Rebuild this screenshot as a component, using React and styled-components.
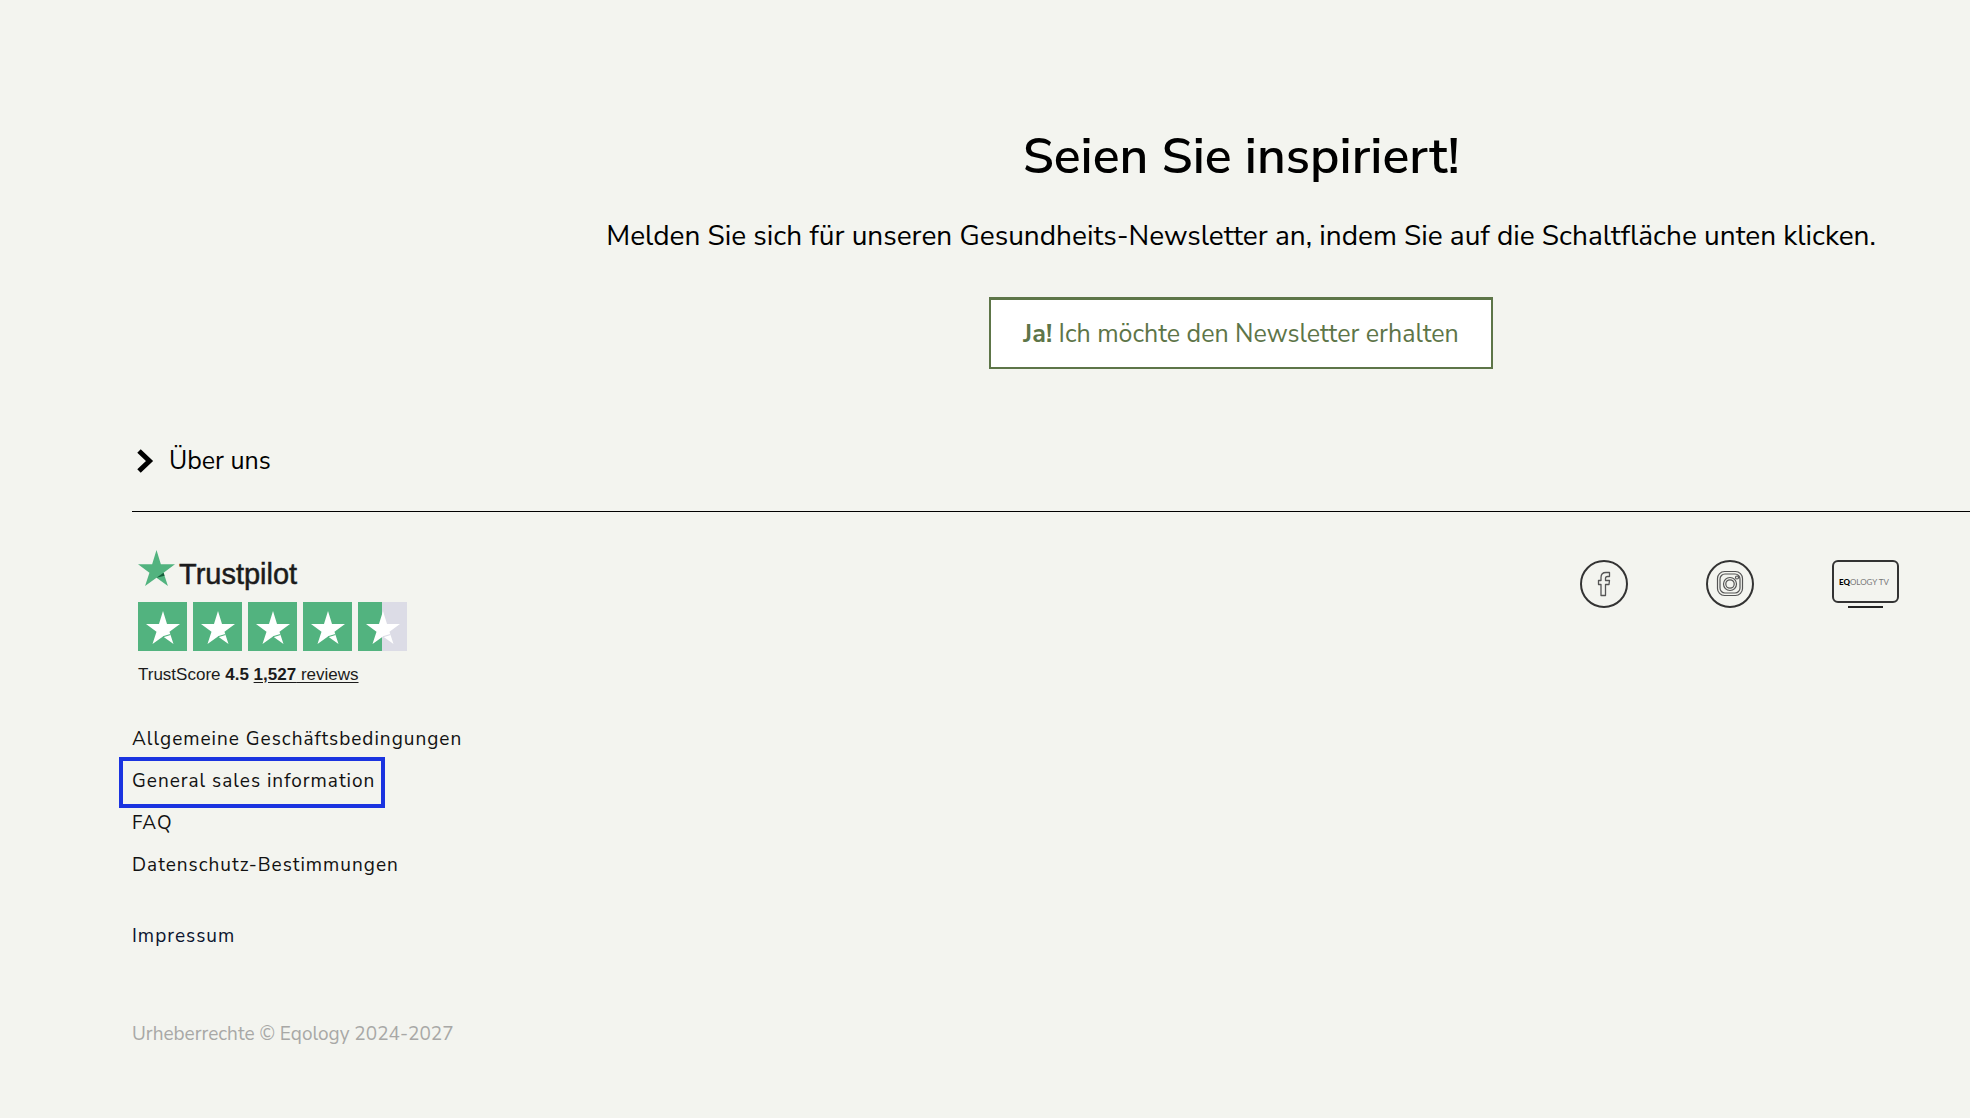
import React from "react";
import styled, { createGlobalStyle } from "styled-components";

const GlobalStyle = createGlobalStyle`
    * {
        box-sizing: border-box;
    }

    body {
        margin: 0;
        background-color: #f3f4ef;
        color: #000000;
        font-family: "Nunito Sans", "Noto Sans", sans-serif;
    }
`;

const STAR = "M50 0 L61.8 38.2 L100 38.2 L69.1 61 L80.9 97 L50 74.7 L19.1 97 L30.9 61 L0 38.2 L38.2 38.2 Z";

const links = [
    { label: "Allgemeine Geschäftsbedingungen" },
    { label: "General sales information", marked: true },
    { label: "FAQ" },
    { label: "Datenschutz-Bestimmungen" },
];

// fill: how much of the box is green, in percent
const RatingStar = ({ fill }) => (
    <StarBox $fill={fill}>
        <svg width="34" height="33" viewBox="0 0 100 97">
            <path d={STAR} fill="#ffffff" />
            <path d="M50 76 L72 69" stroke={fill === 100 ? "#52b37f" : "#dcdce6"} strokeWidth="3" />
        </svg>
    </StarBox>
);

const Trustpilot = () => (
    <Trust>
        <TrustBrand>
            <svg width="37" height="36" viewBox="0 0 100 97">
                <path d={STAR} fill="#52b37f" />
                <path d="M50 74.7 L71.8 69.2 L69.1 61 Z" fill="#17603c" />
            </svg>
            <TrustName>Trustpilot</TrustName>
        </TrustBrand>
        <Stars role="img" aria-label="4.5">
            {[100, 100, 100, 100, 49].map((fill, i) => (
                <RatingStar key={i} fill={fill} />
            ))}
        </Stars>
        <TrustScore>
            TrustScore <b>4.5</b> <ReviewLink href="#reviews"><b>1,527</b> reviews</ReviewLink>
        </TrustScore>
    </Trust>
);

const FacebookIcon = () => (
    <svg width="48" height="48" viewBox="0 0 48 48" fill="none" stroke="#333333">
        <circle cx="24" cy="24" r="23" strokeWidth="2" />
        <path d="M21 35.5 V24.5 H18.5 V20.5 H21 V17.5 Q21 12.5 26 12.5 H29.5 V16.5 H27.5 Q25.5 16.5 25.5 18.5 V20.5 H29.5 L29 24.5 H25.5 V35.5 Z" stroke="#555555" strokeWidth="1.3" strokeLinejoin="round" />
    </svg>
);

const InstagramIcon = () => (
    <svg width="48" height="48" viewBox="0 0 48 48" fill="none" stroke="#333333">
        <circle cx="24" cy="24" r="23" strokeWidth="2" />
        <g stroke="#555555" strokeWidth="1.2">
            <rect x="11.5" y="11.5" width="25" height="24" rx="7" />
            <rect x="14" y="14" width="20" height="19" rx="5" />
            <circle cx="24" cy="24" r="6.5" />
            <circle cx="24" cy="24" r="4.2" />
            <circle cx="31" cy="17.5" r="1.5" />
        </g>
    </svg>
);

const TvIcon = () => (
    <svg width="68" height="48" viewBox="0 0 68 48">
        <rect x="1" y="1" width="65" height="41" rx="5" fill="none" stroke="#333333" strokeWidth="2" />
        <path d="M16 47 H51" stroke="#222222" strokeWidth="2" />
        <text x="7" y="25" fontFamily="Lato, sans-serif" fontSize="8" fontWeight="400" fill="#777777">
            <tspan fontWeight="900" fill="#000000">EQ</tspan>OLOGY TV
        </text>
    </svg>
);

const App = () => (
    <Page>
        <GlobalStyle />
        <Newsletter>
            <Title>Seien Sie inspiriert!</Title>
            <SubTitle>
                Melden Sie sich für unseren Gesundheits-Newsletter an, indem Sie auf die Schaltfläche unten klicken.
            </SubTitle>
            <SignUpButton type="button">
                <b>Ja!</b> Ich möchte den Newsletter erhalten
            </SignUpButton>
        </Newsletter>
        <Footer>
            <AboutButton type="button">
                <svg width="17" height="24" viewBox="0 0 17 24" fill="none" stroke="#000000" strokeWidth="5">
                    <path d="M2 2 L12.5 12 L2 22" />
                </svg>
                Über uns
            </AboutButton>
            <Line />
            <FooterTop>
                <Trustpilot />
                <Social>
                    <a href="#facebook" aria-label="Facebook"><FacebookIcon /></a>
                    <a href="#instagram" aria-label="Instagram"><InstagramIcon /></a>
                    <a href="#tv" aria-label="Eqology TV"><TvIcon /></a>
                </Social>
            </FooterTop>
            <LinkList>
                {links.map(({ label, marked }) => (
                    <LinkItem key={label}>
                        <FooterLink href="#info" $marked={marked}>{label}</FooterLink>
                    </LinkItem>
                ))}
            </LinkList>
            <ImprintLink href="#impressum">Impressum</ImprintLink>
            <Copyright>Urheberrechte © Eqology 2024-2027</Copyright>
        </Footer>
    </Page>
);

export default App;

const Page = styled.div`
    width: 100%;
    overflow: hidden;
`;

const Newsletter = styled.section`
    display: flex;
    flex-direction: column;
    align-items: center;
    padding: 120px 0 0 26%;
`;

const Title = styled.h2`
    margin: 0;
    font-size: 50px;
    font-weight: 600;
    line-height: 74px;
`;

const SubTitle = styled.p`
    margin: 22px 0 41px;
    font-size: 28px;
    line-height: 40px;
    white-space: nowrap;
`;

const SignUpButton = styled.button`
    height: 72px;
    padding: 0 32px;
    border: 2px solid #5d7548;
    border-top-width: 3px;
    background-color: #ffffff;
    color: #5d7548;
    font-family: inherit;
    font-size: 25px;
    font-weight: 400;
    white-space: nowrap;
`;

const Footer = styled.footer`
    padding: 73px 0 0 132px;
`;

const AboutButton = styled.button`
    display: flex;
    align-items: center;
    gap: 15px;
    height: 38px;
    padding: 0 5px;
    border: 0;
    background: none;
    color: #000000;
    font-family: inherit;
    font-size: 25px;
`;

const Line = styled.hr`
    height: 1px;
    margin: 31px 0 0;
    border: 0;
    background-color: #000000;
`;

const FooterTop = styled.div`
    display: flex;
    justify-content: space-between;
    align-items: flex-start;
    padding: 38px 70px 0 6px;
`;

const Trust = styled.div`
    color: #1b1b1b;
    font-family: "Liberation Sans", Arial, sans-serif;
`;

const TrustBrand = styled.div`
    display: flex;
    align-items: flex-start;
    gap: 4px;
    height: 52px;
`;

const TrustName = styled.span`
    padding-top: 8px;
    font-size: 29px;
    line-height: 32px;
    -webkit-text-stroke: 0.5px #1b1b1b;
`;

const Stars = styled.div`
    display: flex;
    gap: 6px;
`;

const StarBox = styled.span`
    display: flex;
    align-items: center;
    justify-content: center;
    width: 49px;
    height: 49px;
    padding-top: 2px;
    background: ${({ $fill }) => `linear-gradient(to right, #52b37f ${$fill}%, #dcdce6 ${$fill}%)`};
`;

const TrustScore = styled.p`
    margin: 12px 0 0;
    font-size: 17px;
    line-height: 24px;
`;

const ReviewLink = styled.a`
    color: inherit;
    text-underline-offset: 2px;
`;

const Social = styled.div`
    display: flex;
    gap: 78px;
    padding-top: 10px;

    svg {
        display: block;
    }
`;

const LinkList = styled.ul`
    margin: 0;
    padding: 32px 0 0;
    list-style: none;
`;

const LinkItem = styled.li`
    display: flex;
    align-items: center;
    height: 42px;
`;

const FooterLink = styled.a`
    display: flex;
    align-items: center;
    height: 51px;
    margin-left: ${({ $marked }) => ($marked ? "-13px" : "0")};
    padding: ${({ $marked }) => ($marked ? "0 6px 3px 9px" : "0 0 3px")};
    border: ${({ $marked }) => ($marked ? "4px solid #1a33e0" : "0")};
    color: #111111;
    font-size: 19px;
    letter-spacing: 1px;
    text-decoration: none;
`;

const ImprintLink = styled.a`
    display: block;
    margin-top: 29px;
    color: #0b1530;
    font-size: 19px;
    line-height: 40px;
    letter-spacing: 1px;
    text-decoration: none;
`;

const Copyright = styled.p`
    margin: 58px 0 0;
    color: #a8a8a6;
    font-size: 19px;
    line-height: 40px;
`;
